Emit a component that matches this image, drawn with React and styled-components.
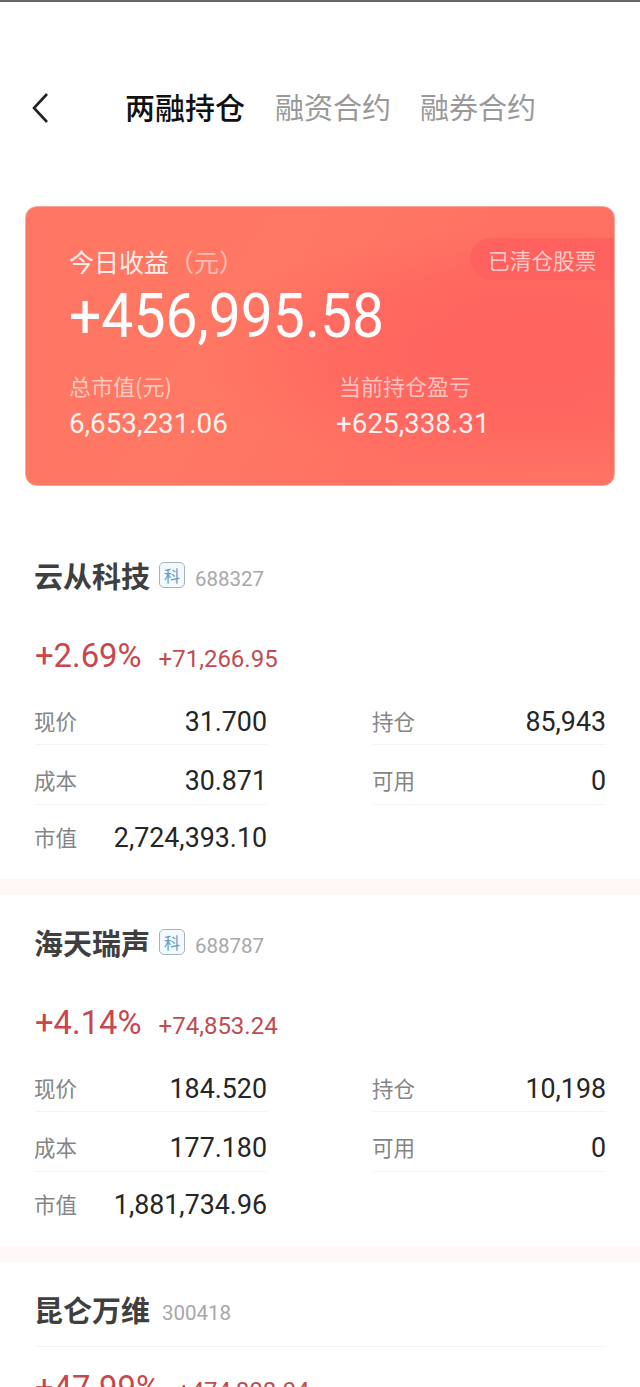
import React from "react";
import styled, { createGlobalStyle } from "styled-components";

const Global = createGlobalStyle`
  html, body { margin: 0; padding: 0; background: #fff; }
  body { font-family: Roboto, "Noto Sans CJK SC", sans-serif; }
`;
const Page = styled.div`
  width: 640px; height: 1387px; overflow: hidden; background: #fff;
  border-top: 2px solid #666; box-sizing: border-box;
`;
const Header = styled.header`
  display: flex; align-items: center; height: 62px; margin-top: 73px; padding-left: 30px;
`;
const Back = styled.svg`
  width: 22px; height: 32px; flex: none; margin-right: 73px; margin-top: 2px;
`;
const Tab = styled.div`
  font-family: "Noto Sans CJK SC", sans-serif;
  font-size: ${p => (p.$active ? "30px" : "29px")};
  font-weight: ${p => (p.$active ? 500 : 400)};
  color: ${p => (p.$active ? "#111" : "#999")};
  margin-right: ${p => (p.$active ? "30px" : "29px")};
  white-space: nowrap;
`;
const Card = styled.section`
  position: relative; box-sizing: border-box;
  margin: 69px 25px 42px; height: 280px; width: 590px; border-radius: 12px;
  padding: 36px 43px 0;
  color: #fff; overflow: hidden;
  border: 1px solid #f5a79c;
  background:
    radial-gradient(ellipse 330px 125px at 86% 52%, rgba(255,86,90,.5) 0%, rgba(255,86,90,.34) 62%, rgba(255,86,90,0) 100%),
    linear-gradient(120deg, #ff7764 0%, #ff7863 40%, #ff7163 68%, #ff7264 100%);
`;
const Chip = styled.div`
  position: absolute; top: 31px; right: -1px; width: 145px; height: 42px;
  box-sizing: border-box; padding-left: 18px; display: flex; align-items: center;
  background: #ff625e; border-radius: 21px 0 0 21px;
  font-family: "Noto Sans CJK SC", sans-serif; font-size: 21.7px; color: rgba(255,255,255,.66);
  white-space: nowrap;
`;
const CardLabel = styled.div`
  font-family: "Noto Sans CJK SC", sans-serif; font-size: 25px; line-height: 36px;
  color: rgba(255,255,255,.9); white-space: nowrap;
`;
const Unit = styled.span`
  color: rgba(255,255,255,.55);
`;
const BigNumber = styled.div`
  font-size: 62px; line-height: 66px; margin-top: 4px; font-weight: 400;
  transform: scaleX(.92); transform-origin: left center; white-space: nowrap;
`;
const Stats = styled.div`
  display: grid; grid-template-columns: 267px 1fr; margin-top: 20px;
`;
const StatLabel = styled.div`
  font-family: "Noto Sans CJK SC", sans-serif; font-size: 22px; line-height: 32px;
  color: rgba(255,255,255,.62); white-space: nowrap;
  margin-left: ${p => p.$shift || 0}px;
`;
const StatValue = styled.div`
  font-size: 27.8px; line-height: 36px; color: rgba(255,255,255,.92); margin-top: 5px;
`;
const Stock = styled.article`
  box-sizing: border-box; height: 351px; padding: 28px 34px 0 35px;
`;
const Band = styled.div`
  height: 16px; background: #fff6f6;
`;
const Title = styled.div`
  display: flex; align-items: center; height: 38px;
`;
const Name = styled.div`
  font-family: "Noto Sans CJK SC", sans-serif; font-weight: 700; font-size: 29px; color: #3f3f3f;
  white-space: nowrap; margin-left: -1px;
`;
const Badge = styled.span`
  width: 26px; height: 26px; box-sizing: border-box; margin-left: 9px;
  display: inline-flex; align-items: center; justify-content: center;
  border: 1.5px solid #a3b4bd; border-radius: 5px; background: #f3f9fc;
  font-family: "Noto Sans CJK SC", sans-serif; font-size: 16px; color: #5f9cc0;
`;
const Code = styled.span`
  margin-left: ${p => (p.$badge ? "10px" : "12px")}; margin-top: 8px; font-size: 20.5px; color: #a8a8a8;
`;
const Rule = styled.div`
  height: 1px; background: #f4f4f4; margin-top: 18px;
`;
const Change = styled.div`
  display: flex; align-items: baseline; margin-top: 42px; height: 40px; color: #c8464c; white-space: nowrap;
`;
const ChangeAfterRule = styled(Change)`
  margin-top: 21px;
`;
const Pct = styled.span`
  font-size: 32.8px; line-height: 40px;
`;
const Amount = styled.span`
  font-size: 24px; margin-left: 17px; color: #bf4c50;
`;
const Grid = styled.div`
  display: grid; grid-template-columns: 232px 233px; column-gap: 106px; margin-top: 11px;
`;
const Cell = styled.div`
  display: flex; justify-content: space-between; align-items: center;
  box-sizing: border-box;
  height: ${p => [58, 60, 58][p.$row]}px;
  padding-top: ${p => [12, 12, 8][p.$row]}px;
  border-bottom: ${p => (p.$row === 2 ? "none" : "1px solid #f3f3f3")};
`;
const Label = styled.span`
  font-family: "Noto Sans CJK SC", sans-serif; font-size: 21.5px; color: #858585;
  margin-top: -3px; margin-left: -1px;
`;
const Value = styled.span`
  font-size: 26.8px; color: #262626;
`;

const stocks = [
  { name: "云从科技", code: "688327", pct: "+2.69%", amt: "+71,266.95", price: "31.700", cost: "30.871", mv: "2,724,393.10", hold: "85,943" },
  { name: "海天瑞声", code: "688787", pct: "+4.14%", amt: "+74,853.24", price: "184.520", cost: "177.180", mv: "1,881,734.96", hold: "10,198" },
];

function StockBlock({ s }) {
  return (
    <Stock>
      <Title>
        <Name>{s.name}</Name>
        <Badge>科</Badge>
        <Code $badge>{s.code}</Code>
      </Title>
      <Change>
        <Pct>{s.pct}</Pct>
        <Amount>{s.amt}</Amount>
      </Change>
      <Grid>
        <Cell $row={0}><Label>现价</Label><Value>{s.price}</Value></Cell>
        <Cell $row={0}><Label>持仓</Label><Value>{s.hold}</Value></Cell>
        <Cell $row={1}><Label>成本</Label><Value>{s.cost}</Value></Cell>
        <Cell $row={1}><Label>可用</Label><Value>0</Value></Cell>
        <Cell $row={2}><Label>市值</Label><Value>{s.mv}</Value></Cell>
      </Grid>
    </Stock>
  );
}

export default function App() {
  return (
    <Page>
      <Global />
      <Header>
        <Back viewBox="0 0 22 32" fill="none" stroke="#222" strokeWidth="2.6">
          <path d="M17 3 L4 17 L17 31" />
        </Back>
        <Tab $active>两融持仓</Tab>
        <Tab>融资合约</Tab>
        <Tab>融券合约</Tab>
      </Header>
      <Card>
        <Chip>已清仓股票</Chip>
        <CardLabel>今日收益<Unit>（元）</Unit></CardLabel>
        <BigNumber>+456,995.58</BigNumber>
        <Stats>
          <div>
            <StatLabel>总市值(元)</StatLabel>
            <StatValue>6,653,231.06</StatValue>
          </div>
          <div>
            <StatLabel $shift={3}>当前持仓盈亏</StatLabel>
            <StatValue>+625,338.31</StatValue>
          </div>
        </Stats>
      </Card>
      <StockBlock s={stocks[0]} />
      <Band />
      <StockBlock s={stocks[1]} />
      <Band />
      <Stock>
        <Title>
          <Name>昆仑万维</Name>
          <Code>300418</Code>
        </Title>
        <Rule />
        <ChangeAfterRule>
          <Pct>+47.99%</Pct>
          <Amount>+474,808.04</Amount>
        </ChangeAfterRule>
      </Stock>
    </Page>
  );
}
